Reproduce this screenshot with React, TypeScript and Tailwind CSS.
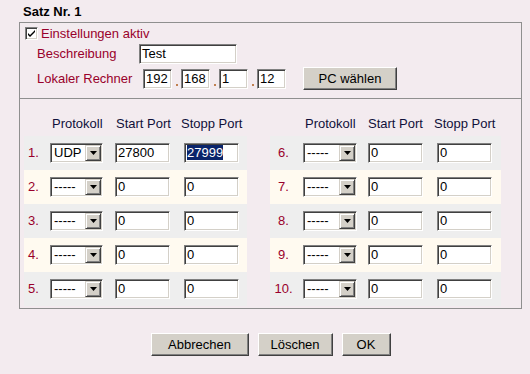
import React from "react";

const font = "font-['Liberation_Sans',Arial,sans-serif]";
const labelColor = "text-[#99002b]";
const headColor = "text-[#10103a]";

const inset =
  "bg-white border border-t-[#808080] border-l-[#808080] border-b-white border-r-white shadow-[inset_1px_1px_0_#404040,inset_-1px_-1px_0_#d4d0c8]";
const raised =
  "bg-[#d4d0c8] border border-t-white border-l-white border-b-[#404040] border-r-[#404040] shadow-[inset_-1px_-1px_0_#808080]";

function TextBox({ value, width, selected }: { value: string; width: string; selected?: boolean }) {
  return (
    <div className={`${inset} ${width} h-[20px] pl-[2px] text-[13px] leading-[18px] text-black overflow-hidden whitespace-nowrap`}>
      {selected ? (
        <span className="inline-block bg-[#0a246a] text-white leading-[15px] mt-[1px]">{value}</span>
      ) : (
        value
      )}
    </div>
  );
}

function Select({ value, width }: { value: string; width: string }) {
  return (
    <div className={`${inset} ${width} h-[20px] pl-[3px] pr-[1px] flex items-center justify-between text-[13px] text-black`}>
      <span className="leading-[18px]">{value}</span>
      <div className="w-[16px] h-[16px] bg-[#d4d0c8] border border-t-[#d4d0c8] border-l-[#d4d0c8] border-b-[#404040] border-r-[#404040] shadow-[inset_1px_1px_0_#fff,inset_-1px_-1px_0_#808080] flex items-center justify-center">
        <svg width="7" height="4" viewBox="0 0 7 4">
          <polygon points="0,0 7,0 3.5,4" fill="#000" />
        </svg>
      </div>
    </div>
  );
}

function Button({ label, width }: { label: string; width: string }) {
  return (
    <div className={`${raised} ${width} h-[23px] flex items-center justify-center text-[13px] text-black`}>{label}</div>
  );
}

type Port = { n: number; proto: string; start: string; stop: string; selected?: boolean };

const left: Port[] = [
  { n: 1, proto: "UDP", start: "27800", stop: "27999", selected: true },
  { n: 2, proto: "-----", start: "0", stop: "0" },
  { n: 3, proto: "-----", start: "0", stop: "0" },
  { n: 4, proto: "-----", start: "0", stop: "0" },
  { n: 5, proto: "-----", start: "0", stop: "0" },
];

const right: Port[] = [6, 7, 8, 9, 10].map((n) => ({ n, proto: "-----", start: "0", stop: "0" }));

function PortColumn({ rows, side }: { rows: Port[]; side: "L" | "R" }) {
  const isL = side === "L";
  return (
    <div className={isL ? "w-[223px]" : "w-[231px]"}>
      <div className={`flex h-[15px] leading-[15px] text-[13px] ${headColor} mb-[5px]`}>
        <div className={isL ? "w-[28px]" : "w-[35px]"} />
        <div className={isL ? "w-[64px]" : "w-[63px]"}>Protokoll</div>
        <div className={isL ? "w-[65px]" : "w-[66px]"}>Start Port</div>
        <div>Stopp Port</div>
      </div>
      {rows.map((r, i) => (
        <div
          key={r.n}
          className={`flex items-center h-[34px] ${i % 2 === 0 ? "bg-[#eeeeee]" : "bg-[#fffaf0]"}`}
        >
          <div className={`${isL ? "w-[19px]" : "w-[27px]"} text-center text-[13px] ${labelColor}`}>{r.n}.</div>
          <div className={isL ? "ml-[7px]" : "ml-[6px]"}>
            <Select value={r.proto} width={isL ? "w-[53px]" : "w-[54px]"} />
          </div>
          <div className={isL ? "ml-[12px]" : "ml-[11px]"}>
            <TextBox value={r.start} width="w-[55px]" />
          </div>
          <div className="ml-[14px]">
            <TextBox value={r.stop} width="w-[55px]" selected={r.selected} />
          </div>
        </div>
      ))}
    </div>
  );
}

function IpDot() {
  return <span className="w-[9px] self-end mb-[3px] flex justify-center"><span className="w-[2px] h-[2px] bg-[#c08050]" /></span>;
}

export default function App() {
  return (
    <div className={`${font} min-h-screen bg-[#f3ebef] pl-[19px] pt-[4px]`}>
      <div className="pl-[4px] h-[15px] leading-[15px] text-[13px] font-bold text-black">Satz Nr. 1</div>

      <div className="mt-[3px] w-[503px] border border-[#8f8f8f]">
        <div className="pt-[3px] pb-[8px] border-b border-[#8f8f8f]">
          <div className="flex items-center h-[15px] pl-[5px]">
            <div className="w-[13px] h-[13px] bg-white border border-t-[#808080] border-l-[#808080] border-b-white border-r-white shadow-[inset_1px_1px_0_#404040,inset_-1px_-1px_0_#d4d0c8] flex items-center justify-center">
              <svg width="9" height="9" viewBox="0 0 9 9">
                <path d="M1 4 L3 6 L8 1 L8 3 L3 8 L1 6 Z" fill="#000" />
              </svg>
            </div>
            <span className={`ml-[3px] text-[13px] ${labelColor}`}>Einstellungen aktiv</span>
          </div>

          <div className="flex items-center h-[20px] mt-[3px] pl-[17px]">
            <div className={`w-[102px] text-[13px] ${labelColor}`}>Beschreibung</div>
            <TextBox value="Test" width="w-[98px]" />
          </div>

          <div className="flex items-center h-[23px] mt-[3px] pl-[17px]">
            <div className={`w-[106px] text-[13px] ${labelColor}`}>Lokaler Rechner</div>
            <div className="flex h-[20px]">
              <TextBox value="192" width="w-[29px]" />
              <IpDot />
              <TextBox value="168" width="w-[29px]" />
              <IpDot />
              <TextBox value="1" width="w-[29px]" />
              <IpDot />
              <TextBox value="12" width="w-[29px]" />
            </div>
            <div className="ml-[17px]">
              <Button label="PC wählen" width="w-[94px]" />
            </div>
          </div>
        </div>

        <div className="flex gap-[23px] pl-[4px] pt-[17px] pb-[2px]">
          <PortColumn rows={left} side="L" />
          <PortColumn rows={right} side="R" />
        </div>
      </div>

      <div className="w-[503px] mt-[24px] flex justify-center gap-[9px]">
        <Button label="Abbrechen" width="w-[98px]" />
        <Button label="Löschen" width="w-[75px]" />
        <Button label="OK" width="w-[49px]" />
      </div>
    </div>
  );
}
